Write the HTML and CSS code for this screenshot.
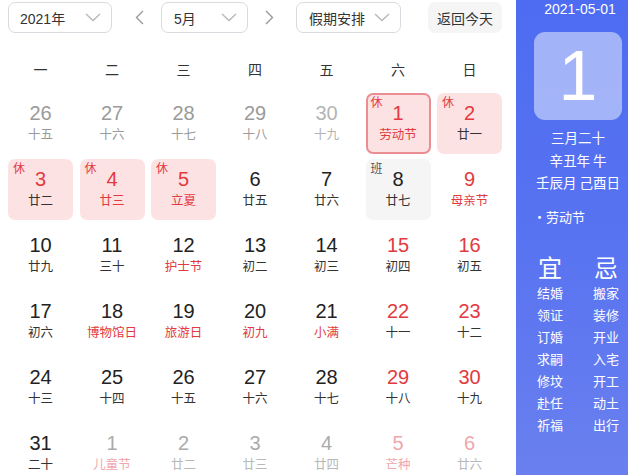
FILE: index.html
```html
<!DOCTYPE html>
<html lang="zh">
<head>
<meta charset="utf-8">
<link rel="stylesheet" href="styles.css">
</head>
<body>
<div class="page">
  <div class="main">
    <div class="toolbar">
      <div class="select sel-year"><span>2021年</span><svg class="chev" width="16" height="9" viewBox="0 0 16 9"><path d="M1 1 L8 7.5 L15 1" fill="none" stroke="#b8b8b8" stroke-width="1.4"/></svg></div>
      <svg class="arrow arrow-prev" width="9" height="15" viewBox="0 0 9 15"><path d="M8 1 L1.5 7.5 L8 14" fill="none" stroke="#999" stroke-width="1.4"/></svg>
      <div class="select sel-month"><span>5月</span><svg class="chev" width="16" height="9" viewBox="0 0 16 9"><path d="M1 1 L8 7.5 L15 1" fill="none" stroke="#b8b8b8" stroke-width="1.4"/></svg></div>
      <svg class="arrow arrow-next" width="9" height="15" viewBox="0 0 9 15"><path d="M1 1 L7.5 7.5 L1 14" fill="none" stroke="#999" stroke-width="1.4"/></svg>
      <div class="select sel-holiday"><span>假期安排</span><svg class="chev" width="16" height="9" viewBox="0 0 16 9"><path d="M1 1 L8 7.5 L15 1" fill="none" stroke="#b8b8b8" stroke-width="1.4"/></svg></div>
      <div class="btn-today">返回今天</div>
    </div>
    <div class="weekdays">
      <span>一</span><span>二</span><span>三</span><span>四</span><span>五</span><span>六</span><span>日</span>
    </div>
    <div class="grid">
      <div class="cell other"><div class="num">26</div><div class="lunar">十五</div></div>
      <div class="cell other"><div class="num">27</div><div class="lunar">十六</div></div>
      <div class="cell other"><div class="num">28</div><div class="lunar">十七</div></div>
      <div class="cell other"><div class="num">29</div><div class="lunar">十八</div></div>
      <div class="cell other light"><div class="num">30</div><div class="lunar">十九</div></div>
      <div class="cell rest selected"><span class="tag">休</span><div class="num red">1</div><div class="lunar red">劳动节</div></div>
      <div class="cell rest"><span class="tag">休</span><div class="num red">2</div><div class="lunar">廿一</div></div>

      <div class="cell rest"><span class="tag">休</span><div class="num red">3</div><div class="lunar">廿二</div></div>
      <div class="cell rest"><span class="tag">休</span><div class="num red">4</div><div class="lunar red">廿三</div></div>
      <div class="cell rest"><span class="tag">休</span><div class="num red">5</div><div class="lunar red">立夏</div></div>
      <div class="cell"><div class="num">6</div><div class="lunar">廿五</div></div>
      <div class="cell"><div class="num">7</div><div class="lunar">廿六</div></div>
      <div class="cell work"><span class="tag tag-work">班</span><div class="num">8</div><div class="lunar">廿七</div></div>
      <div class="cell"><div class="num red">9</div><div class="lunar red">母亲节</div></div>

      <div class="cell"><div class="num">10</div><div class="lunar">廿九</div></div>
      <div class="cell"><div class="num">11</div><div class="lunar">三十</div></div>
      <div class="cell"><div class="num">12</div><div class="lunar red">护士节</div></div>
      <div class="cell"><div class="num">13</div><div class="lunar">初二</div></div>
      <div class="cell"><div class="num">14</div><div class="lunar">初三</div></div>
      <div class="cell"><div class="num red">15</div><div class="lunar">初四</div></div>
      <div class="cell"><div class="num red">16</div><div class="lunar">初五</div></div>

      <div class="cell"><div class="num">17</div><div class="lunar">初六</div></div>
      <div class="cell"><div class="num">18</div><div class="lunar red">博物馆日</div></div>
      <div class="cell"><div class="num">19</div><div class="lunar red">旅游日</div></div>
      <div class="cell"><div class="num">20</div><div class="lunar red">初九</div></div>
      <div class="cell"><div class="num">21</div><div class="lunar red">小满</div></div>
      <div class="cell"><div class="num red">22</div><div class="lunar">十一</div></div>
      <div class="cell"><div class="num red">23</div><div class="lunar">十二</div></div>

      <div class="cell"><div class="num">24</div><div class="lunar">十三</div></div>
      <div class="cell"><div class="num">25</div><div class="lunar">十四</div></div>
      <div class="cell"><div class="num">26</div><div class="lunar">十五</div></div>
      <div class="cell"><div class="num">27</div><div class="lunar">十六</div></div>
      <div class="cell"><div class="num">28</div><div class="lunar">十七</div></div>
      <div class="cell"><div class="num red">29</div><div class="lunar">十八</div></div>
      <div class="cell"><div class="num red">30</div><div class="lunar">十九</div></div>

      <div class="cell"><div class="num">31</div><div class="lunar">二十</div></div>
      <div class="cell other"><div class="num">1</div><div class="lunar fadedred">儿童节</div></div>
      <div class="cell other"><div class="num">2</div><div class="lunar">廿二</div></div>
      <div class="cell other"><div class="num">3</div><div class="lunar">廿三</div></div>
      <div class="cell other"><div class="num">4</div><div class="lunar">廿四</div></div>
      <div class="cell other"><div class="num fadedred">5</div><div class="lunar fadedred">芒种</div></div>
      <div class="cell other"><div class="num fadedred">6</div><div class="lunar">廿六</div></div>
    </div>
  </div>
  <aside class="panel">
    <div class="p-date">2021-05-01</div>
    <div class="p-day">1</div>
    <div class="p-lunar">
      <div>三月二十</div>
      <div>辛丑年 牛</div>
      <div>壬辰月 己酉日</div>
    </div>
    <div class="p-fest">•劳动节</div>
    <div class="p-yiji">
      <div class="col">
        <div class="head">宜</div>
        <div>结婚</div><div>领证</div><div>订婚</div><div>求嗣</div><div>修坟</div><div>赴任</div><div>祈福</div>
      </div>
      <div class="col">
        <div class="head">忌</div>
        <div>搬家</div><div>装修</div><div>开业</div><div>入宅</div><div>开工</div><div>动土</div><div>出行</div>
      </div>
    </div>
  </aside>
</div>
</body>
</html>
```

FILE: styles.css
```css
html, body {
  margin: 0;
  padding: 0;
  background: #fff;
  overflow: hidden;
}
body {
  width: 628px;
  height: 475px;
  font-family: "Liberation Sans", Arial, "Noto Sans CJK SC", sans-serif;
  color: #222;
}
.page {
  display: flex;
  width: 640px;
  height: 475px;
}
.main {
  width: 516px;
  flex: 0 0 516px;
  padding-left: 8px;
  box-sizing: border-box;
}
.toolbar {
  display: flex;
  align-items: center;
  padding-top: 2px;
  height: 31px;
}
.select {
  box-sizing: border-box;
  height: 31px;
  border: 1px solid #d9dbe0;
  border-radius: 7px;
  display: flex;
  align-items: center;
  justify-content: space-between;
  font-size: 14px;
  color: #333;
}
.sel-year { width: 104px; padding: 0 10px 0 11px; }
.sel-month { width: 87px; padding: 0 10px 0 12px; }
.sel-holiday { width: 105px; padding: 0 10px 0 12px; }
.arrow-prev { margin: 0 17px 0 23px; }
.arrow-next { margin: 0 22px 0 17px; }
.btn-today {
  margin-left: 27px;
  width: 74px;
  height: 31px;
  border-radius: 7px;
  background: #f5f5f6;
  font-size: 14px;
  color: #333;
  display: flex;
  align-items: center;
  justify-content: center;
}
.weekdays {
  display: grid;
  grid-template-columns: repeat(7, 1fr);
  column-gap: 6.5px;
  width: 494px;
  padding-top: 27px;
  height: 33px;
  font-size: 14px;
  line-height: 20px;
  color: #333;
  text-align: center;
}
.grid {
  display: grid;
  grid-template-columns: repeat(7, 1fr);
  grid-auto-rows: 61px;
  column-gap: 6.5px;
  row-gap: 5px;
  width: 494px;
}
.cell {
  position: relative;
  box-sizing: border-box;
  border-radius: 7px;
  display: flex;
  flex-direction: column;
  align-items: center;
  padding-top: 9px;
}
.num {
  font-size: 20px;
  line-height: 22px;
  color: #222;
}
.lunar {
  font-family: "Noto Sans CJK SC", sans-serif;
  font-size: 12.5px;
  line-height: 20px;
  color: #333;
}
.red { color: #e23a40; }
.fadedred { color: #f0a7ab !important; }
.other .num, .other .lunar { color: #9a9a9a; }
.other.light .num, .other.light .lunar { color: #b4b4b4; }
.cell.other:nth-child(n+36) .num { color: #ababab; }
.cell.other:nth-child(n+36) .lunar { color: #b8b8b8; }
.rest { background: #fde2e4; }
.selected { border: 2px solid #ea8e94; padding-top: 7px; }
.work { background: #f5f5f6; }
.tag {
  position: absolute;
  top: 2px;
  left: 5px;
  font-family: "Noto Sans CJK SC", sans-serif;
  font-size: 12px;
  line-height: 14px;
  color: #e23a40;
}
.selected .tag { top: 0; left: 3px; }
.tag-work { color: #555; }

.panel {
  flex: 0 0 124px;
  width: 124px;
  height: 475px;
  background: linear-gradient(180deg, #4d6cf1 0%, #5873f1 50%, #6a80ef 100%);
  color: #fff;
  display: flex;
  flex-direction: column;
  align-items: center;
  font-family: "Noto Sans CJK SC", sans-serif;
}
.p-date {
  font-family: "Liberation Sans", Arial, sans-serif;
  font-size: 14px;
  line-height: 18px;
  padding-left: 4px;
}
.p-day {
  margin-top: 14px;
  width: 88px;
  height: 88px;
  border-radius: 11px;
  background: rgba(255, 255, 255, 0.48);
  font-family: "Liberation Sans", Arial, sans-serif;
  font-size: 70px;
  line-height: 88px;
  text-align: center;
}
.p-lunar {
  margin-top: 6px;
  font-size: 13.5px;
  line-height: 22.5px;
  text-align: center;
}
.p-fest {
  align-self: flex-start;
  margin-top: 13px;
  padding-left: 17px;
  font-size: 13px;
  line-height: 20px;
}
.p-yiji {
  margin-top: 26px;
  display: flex;
  gap: 30px;
  font-size: 13px;
  line-height: 22px;
}
.p-yiji .col {
  display: flex;
  flex-direction: column;
  align-items: center;
}
.p-yiji .head {
  font-size: 24px;
  line-height: 28px;
  margin-bottom: 1px;
}
```
